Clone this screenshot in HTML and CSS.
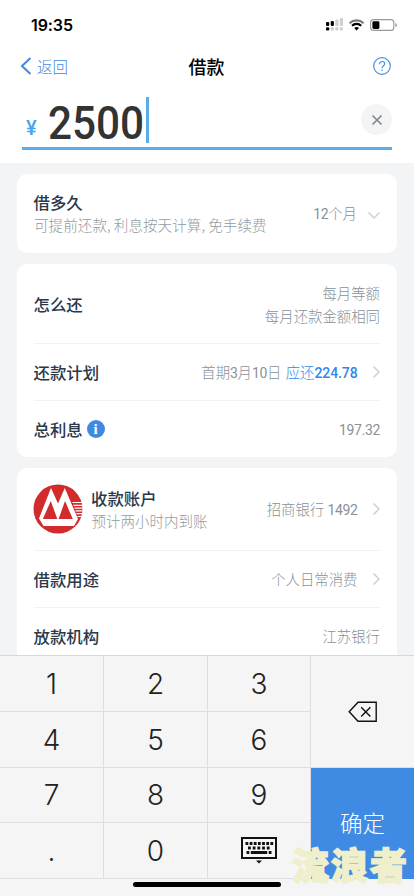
FILE: index.html
```html
<!DOCTYPE html>
<html lang="zh-CN">
<head>
<meta charset="utf-8">
<meta name="viewport" content="width=device-width, initial-scale=1">
<title>借款</title>
<link rel="stylesheet" href="styles.css">
</head>
<body>
<div class="app">
  <header class="top">
    <div class="status">
      <span class="time">19:35</span>
      <svg class="status-icons" width="72" height="16" viewBox="0 0 72 16">
        <g fill="#000"><rect x="0" y="5" width="3.200" height="4" rx="1"/><rect x="4.700" y="4" width="3.200" height="5" rx="1"/><rect x="0" y="10.300" width="3.200" height="3.200" rx="1"/></g>
        <g fill="#cfcfcf"><rect x="9.300" y="2.500" width="3.200" height="6.500" rx="1"/><rect x="13.800" y="1" width="3.200" height="8" rx="1"/><rect x="4.700" y="10.300" width="3.200" height="3.200" rx="1"/><rect x="9.300" y="10.300" width="3.200" height="3.200" rx="1"/><rect x="13.800" y="10.300" width="3.200" height="3.200" rx="1"/></g>
        <path d="M23.600 6.200a10.200 10.200 0 0 1 14 0" fill="none" stroke="#777" stroke-width="2.200"/>
        <path d="M26 8.800a6.700 6.700 0 0 1 9.200 0" fill="none" stroke="#000" stroke-width="2.200"/>
        <path d="M28.200 11.100a3.600 3.600 0 0 1 4.800 0l-2.400 2.500z" fill="#000"/>
        <rect x="44.600" y="2.600" width="23.200" height="10.800" rx="3" fill="none" stroke="#999" stroke-width="1.100"/>
        <rect x="46.400" y="4.300" width="7" height="7.600" rx="1.300" fill="#000"/>
        <path d="M69.300 6v4q1.700-.6 1.700-2t-1.700-2z" fill="#999"/>
      </svg>
    </div>
    <nav class="nav">
      <a class="back"><svg width="12" height="18" viewBox="0 0 12 18"><path d="M10.500 1 2 9l8.500 8" fill="none" stroke="#3f8ae0" stroke-width="2"/></svg><span>返回</span></a>
      <h1>借款</h1>
      <svg class="help" width="18" height="18" viewBox="0 0 18 18" fill="none" stroke="#4a90e2"><circle cx="9" cy="9" r="8.300" stroke-width="1.200"/><path d="M6.500 7.200c0-3.500 5.200-3.500 5.200-.4C11.700 8.800 9 8.800 9 11.200" stroke-width="1.200"/><circle cx="9" cy="13.300" r=".8" fill="#4a90e2" stroke="none"/></svg>
    </nav>
    <div class="amount">
      <span class="yen">¥</span><span class="value">2500</span><i class="caret"></i>
      <span class="clear"><svg width="12" height="12" viewBox="0 0 12 12"><path d="m1.500 1.500 9 9m0-9-9 9" stroke="#85858a" stroke-width="1.600"/></svg></span>
    </div>
  </header>
  <main class="list">
    <section class="card">
      <div class="row term"><div class="text"><h2>借多久</h2><p class="sub">可提前还款, 利息按天计算, 免手续费</p></div>
        <span class="val"><b>12</b>个月</span><svg class="chev down" width="14" height="9" viewBox="0 0 14 9"><path d="m1.500 1.500 5.500 5.500 5.500-5.500"/></svg></div>
    </section>
    <section class="card">
      <div class="row how"><h2>怎么还</h2><span class="val two">每月等额<br>每月还款金额相同</span></div>
      <div class="row"><h2>还款计划</h2><span class="val">首期<b>3</b>月<b>10</b>日 <em>应还<b>224.78</b></em></span><svg class="chev" width="9" height="14" viewBox="0 0 9 14"><path d="m1.500 1.500 5.500 5.500-5.500 5.500"/></svg></div>
      <div class="row"><h2>总利息</h2><span class="info">i</span><span class="val"><b>197.32</b></span></div>
    </section>
    <section class="card">
      <div class="row account">
        <svg class="logo" width="50" height="50" viewBox="0 0 50 50">
          <circle cx="25" cy="25" r="24.500" fill="#d22b2b"/>
          <path d="M18 4 25 19.500 31.800 4 45 35 41 42H10.500L6 34.500z" fill="#fff"/>
          <path d="M17.800 17 24.300 35H9.800zM32 17 39.800 35H25.600z" fill="#d22b2b"/>
          <path d="M39.500 18.500h9.500M40.500 21.300h9M41.500 24.100h8.300M42.500 26.900h7M43.500 29.700h5.500M44.500 32.500h4" stroke="#fff" stroke-width="1.200"/>
        </svg>
        <div class="text"><h2>收款账户</h2><p class="sub">预计两小时内到账</p></div>
        <span class="val">招商银行 <b>1492</b></span><svg class="chev" width="9" height="14" viewBox="0 0 9 14"><path d="m1.500 1.500 5.500 5.500-5.500 5.500"/></svg></div>
      <div class="row"><h2>借款用途</h2><span class="val">个人日常消费</span><svg class="chev" width="9" height="14" viewBox="0 0 9 14"><path d="m1.500 1.500 5.500 5.500-5.500 5.500"/></svg></div>
      <div class="row"><h2>放款机构</h2><span class="val">江苏银行</span></div>
    </section>
  </main>
  <footer class="keyboard">
    <div class="keys">
      <span>1</span><span>2</span><span>3</span>
      <span class="delete"><svg width="30" height="22" viewBox="0 0 30 22" fill="none" stroke="#111"><path d="M10 1.200h18.200v19H10L1.200 10.700z" stroke-width="1.400"/><path d="m13.200 6.200 9.200 9.200m0-9.200-9.200 9.200" stroke-width="1.400"/></svg></span>
      <span>4</span><span>5</span><span>6</span>
      <span>7</span><span>8</span><span>9</span>
      <span class="confirm">确定</span>
      <span>.</span><span>0</span>
      <span><svg width="36" height="27" viewBox="0 0 36 27"><rect x="1" y="1" width="34" height="20" fill="none" stroke="#111" stroke-width="2"/><path d="M4.500 6.500h28" stroke="#111" stroke-width="2.800" stroke-dasharray="2.800 1.350"/><path d="M7 11h23" stroke="#111" stroke-width="2.800" stroke-dasharray="2.800 1.900"/><path d="M5.500 15.500h2.800m1.500 0h16.400m1.500 0h2.800" stroke="#111" stroke-width="2.800"/><path d="M15 23.500h6L18 26.500z" fill="#111"/></svg></span>
    </div>
    <div class="home"></div>
    <div class="watermark">流浪者</div>
  </footer>
</div>
</body>
</html>
```
FILE: styles.css
```css
* { box-sizing: border-box; }
body { margin: 0; background: #f3f4f6; font-family: "Noto Sans CJK SC", sans-serif; color: #29384a; }
h1, h2, p { margin: 0; }
.app { width: 414px; height: 896px; overflow: hidden; display: flex; flex-direction: column; }
.top { height: 163px; background: #fff; flex: none; }
.status { height: 44px; padding: 6px 16px 0 31px; display: flex; justify-content: space-between; align-items: center; }
.time { font: 600 16px/20px Inter, sans-serif; color: #000; letter-spacing: -.1px; }
.nav { height: 44px; padding: 0 23px 0 20px; display: grid; grid-template-columns: 1fr auto 1fr; align-items: center; }
.back { display: flex; align-items: center; gap: 5px; color: #3f8ae0; font-size: 15.500px; font-weight: 300; line-height: 22px; }
.back span { margin-top: -1px; }
h1 { font-size: 18px; font-weight: 500; line-height: 24px; color: #000; padding-left: 2px; }
.help { justify-self: end; }
.amount { height: 62px; margin: 0 22px; border-bottom: 3px solid #5aaceb; display: flex; align-items: center; }
.yen { width: 26px; padding: 20px 0 0 4px; font: 500 20px/24px Roboto, sans-serif; color: #45a6f0; }
.value { width: 97px; font: 500 47px/56px Roboto, sans-serif; color: #333; transform: scaleX(.9); transform-origin: left; margin-top: 10px; }
.caret { width: 3px; height: 46px; background: #5aaceb; margin-top: 4px; margin-left: 1px; }
.clear { margin-left: auto; width: 31px; height: 31px; border-radius: 50%; background: #f3f4f6; display: grid; place-items: center; margin-top: 4px; }
.list { flex: none; height: 492px; overflow: hidden; padding: 11px 17px 0; display: flex; flex-direction: column; gap: 11px; }
.card { background: #fff; border-radius: 10px; padding: 0 17px; flex: none; }
.row { height: 57px; display: flex; align-items: center; }
.row + .row { border-top: 1px solid #f1f2f4; }
.term, .how { height: 79px; }
.account { height: 82px; }
.text { margin-top: -2px; }
h2 { font-size: 16.400px; line-height: 24px; font-weight: 500; margin-left: -.5px; }
.sub { font-size: 14.500px; line-height: 21px; font-weight: 300; color: #929aa2; white-space: nowrap; }
.term .sub { font-size: 14.600px; }
.val { margin-left: auto; font-size: 14.400px; line-height: 22px; font-weight: 300; color: #88919a; white-space: nowrap; }
.val b { font-family: Roboto, sans-serif; font-weight: 400; font-size: 14px; letter-spacing: -.35px; }
.val em { color: #3088e8; font-style: normal; font-weight: 300; margin-left: 1px; }
.val em b { font-weight: 500; letter-spacing: -.1px; }
.two { text-align: right; line-height: 23px; }
.chev { margin-left: 14px; fill: none; stroke: #cdd0d4; stroke-width: 1.500; margin-right: -.5px; }
.down { margin-left: 10px; margin-right: -1px; margin-top: 4px; }
.info { margin-left: 4px; width: 18px; height: 18px; border-radius: 50%; background: #3f8ae0; color: #fff; font: bold 15px/18px "Liberation Serif", serif; text-align: center; }
.logo { margin: 0 8.500px 0 -1px; }
.keyboard { height: 241px; flex: none; background: #f5f5f6; position: relative; }
.keys { height: 224px; display: grid; grid-template-columns: 104px 104px 103px 103px; grid-template-rows: 56px 56px 55px 56px; border-top: 1px solid #d8d8da; }
.keys span { display: grid; place-items: center; font: 300 28px/36px Inter, sans-serif; color: #222; border-right: 1px solid #dedee0; border-bottom: 1px solid #dedee0; }
.keys .delete { grid-column: 4; grid-row: 1 / 3; border-right: 0; }
.keys .confirm { grid-column: 4; grid-row: 3 / 5; background: #3f8be3; color: #fff; font: 300 22.500px/32px "Noto Sans CJK SC", sans-serif; border: 0; padding-bottom: 4px; }
.home { width: 148px; height: 5px; border-radius: 3px; background: #000; margin: 3px auto 0; }
.watermark { position: absolute; left: 292px; top: 190px; font-size: 37px; line-height: 38px; font-weight: 900; letter-spacing: 2px; color: #f0efcb; -webkit-text-stroke: 1.500px #f0efcb; white-space: nowrap; }
```
